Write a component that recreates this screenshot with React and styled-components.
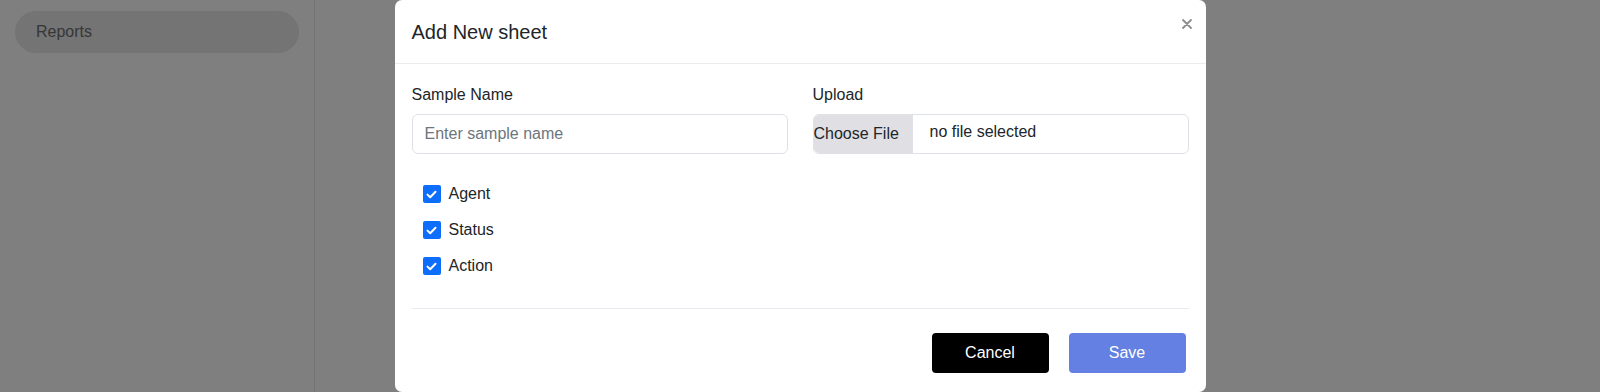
import styled, { createGlobalStyle } from 'styled-components';

const GlobalStyle = createGlobalStyle`
  html, body {
    margin: 0;
    padding: 0;
    height: 392px;
    overflow: hidden;
    font-family: "Liberation Sans", Arial, sans-serif;
    background: #ffffff;
  }
  * { box-sizing: border-box; }
`;

const Page = styled.div`
  position: relative;
  display: flex;
  height: 392px;
  background: #ffffff;
`;

const Sidebar = styled.aside`
  width: 315px;
  border-right: 1px solid #e6e6e6;
  padding: 11px 15px 0 15px;
`;

const NavItem = styled.div`
  height: 42px;
  border-radius: 21px;
  background: #e8e8e8;
  display: flex;
  align-items: center;
  padding-left: 21px;
  font-size: 16px;
  color: #6e6e6e;
`;

const Main = styled.main`
  flex: 1;
`;

const Backdrop = styled.div`
  position: absolute;
  inset: 0;
  background: rgba(0, 0, 0, 0.5);
  display: flex;
  justify-content: center;
  align-items: flex-start;
`;

const Modal = styled.div`
  width: 811px;
  height: 392px;
  background: #ffffff;
  border-radius: 7px;
  display: flex;
  flex-direction: column;
`;

const Header = styled.div`
  height: 64px;
  border-bottom: 1px solid #ececf0;
  display: flex;
  align-items: center;
  justify-content: space-between;
  padding: 0 14px 0 17px;
`;

const Title = styled.h5`
  margin: 0;
  margin-top: 1px;
  font-size: 20px;
  font-weight: 400;
  color: #212529;
  line-height: 24px;
`;

const CloseButton = styled.button`
  border: none;
  background: none;
  padding: 0;
  width: 10px;
  height: 10px;
  align-self: flex-start;
  margin-top: 19px;
  display: flex;
  cursor: pointer;
`;

const Body = styled.div`
  padding: 21px 17px 0;
`;

const FieldRow = styled.div`
  display: grid;
  grid-template-columns: 1fr 1fr;
  column-gap: 25px;
`;

const Field = styled.div`
  display: flex;
  flex-direction: column;
`;

const Label = styled.label`
  font-size: 16px;
  line-height: 19px;
  color: #212529;
  margin-bottom: 10px;
`;

const TextInput = styled.input`
  height: 40px;
  border: 1px solid #dee2e6;
  border-radius: 6px;
  padding: 0 12px;
  font-size: 16px;
  font-family: "Liberation Sans", Arial, sans-serif;
  color: #212529;
  outline: none;
  &::placeholder { color: #6c757d; }
`;

const FileBox = styled.div`
  height: 40px;
  border: 1px solid #dee2e6;
  border-radius: 6px;
  display: flex;
  align-items: stretch;
  overflow: hidden;
  font-size: 16px;
  color: #212529;
`;

const FileButton = styled.span`
  width: 99px;
  background: #e0e0e4;
  border-right: 1px solid #dee2e6;
  display: flex;
  align-items: center;
`;

const FileName = styled.span`
  display: flex;
  align-items: center;
  padding-left: 17px;
  padding-bottom: 5px;
`;

const CheckList = styled.div`
  margin-top: 22px;
  padding-left: 11px;
  display: flex;
  flex-direction: column;
`;

const CheckRow = styled.label`
  height: 36px;
  display: flex;
  align-items: center;
  gap: 8px;
  font-size: 16px;
  color: #212529;
`;

const Box = styled.span`
  width: 18px;
  height: 18px;
  border-radius: 2px;
  background: #0d6efd;
  display: flex;
  align-items: center;
  justify-content: center;
`;

const Divider = styled.hr`
  margin: 24px 0 0;
  border: none;
  border-top: 1px solid #e9e9ef;
`;

const Footer = styled.div`
  display: flex;
  justify-content: flex-end;
  gap: 20px;
  padding: 24px 3px 0 0;
`;

const Button = styled.button`
  width: 117px;
  height: 40px;
  border: none;
  border-radius: 4px;
  font-size: 16px;
  font-family: "Liberation Sans", Arial, sans-serif;
  color: #ffffff;
  background: ${p => (p.$primary ? '#6480e2' : '#000000')};
  cursor: pointer;
`;

const Check = () => (
  <Box>
    <svg width="11" height="9" viewBox="0 0 11 9">
      <path d="M1.5 4.6 L4.2 7.2 L9.5 1.8" fill="none" stroke="#fff" strokeWidth="2" strokeLinecap="round" strokeLinejoin="round" />
    </svg>
  </Box>
);

const options = ['Agent', 'Status', 'Action'];

export default function App() {
  return (
    <>
      <GlobalStyle />
      <Page>
        <Sidebar>
          <NavItem>Reports</NavItem>
        </Sidebar>
        <Main />
        <Backdrop>
          <Modal>
            <Header>
              <Title>Add New sheet</Title>
              <CloseButton aria-label="close">
                <svg width="10" height="10" viewBox="0 0 10 10">
                  <path d="M1 1 L9 9 M9 1 L1 9" stroke="#8c8c8c" strokeWidth="1.8" strokeLinecap="round" />
                </svg>
              </CloseButton>
            </Header>
            <Body>
              <FieldRow>
                <Field>
                  <Label>Sample Name</Label>
                  <TextInput placeholder="Enter sample name" />
                </Field>
                <Field>
                  <Label>Upload</Label>
                  <FileBox>
                    <FileButton>Choose File</FileButton>
                    <FileName>no file selected</FileName>
                  </FileBox>
                </Field>
              </FieldRow>
              <CheckList>
                {options.map(o => (
                  <CheckRow key={o}>
                    <Check />
                    {o}
                  </CheckRow>
                ))}
              </CheckList>
              <Divider />
              <Footer>
                <Button>Cancel</Button>
                <Button $primary>Save</Button>
              </Footer>
            </Body>
          </Modal>
        </Backdrop>
      </Page>
    </>
  );
}
